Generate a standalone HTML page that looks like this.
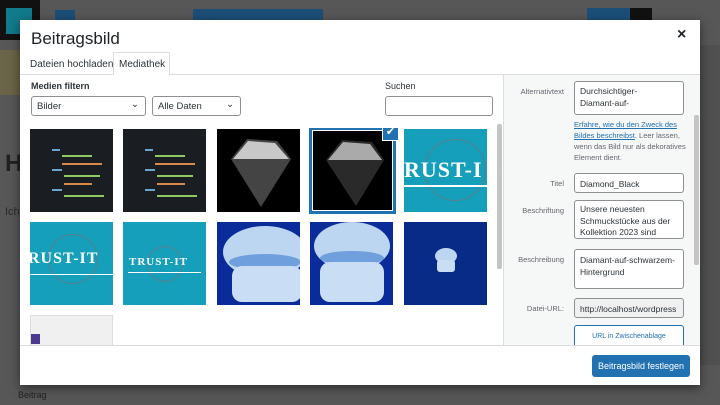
<!DOCTYPE html>
<html><head><meta charset="utf-8"><style>
*{box-sizing:border-box;margin:0;padding:0}
body{width:720px;height:405px;overflow:hidden;background:#575757;font-family:"Liberation Sans",sans-serif;position:relative;font-size:9px;color:#1e1e1e}
.abs{position:absolute}
.modal{left:20px;top:20px;width:680px;height:365px;background:#fff;box-shadow:0 3px 10px rgba(0,0,0,.5)}
.tile{position:absolute;width:83px;height:83px;overflow:hidden}
.code{background:#1a1d22}
.code i{position:absolute;height:2px;display:block}
.teal{background:#159fbb}
.jf{background:#0a2c9a}
.inp{position:absolute;background:#fff;border:1px solid #8c8f94;border-radius:3px;font-size:8.5px;padding:5px 5px;line-height:11px;color:#2c3338;overflow:hidden}
.lbl{position:absolute;font-size:7.5px;color:#646970;text-align:right;width:60px}
</style></head><body>
<div class="abs" style="left:0;top:0;width:40px;height:40px;background:#111"></div>
<div class="abs" style="left:6px;top:8px;width:26px;height:26px;background:#117a8b"></div>
<div class="abs" style="left:55px;top:10px;width:20px;height:20px;background:#1c4f78"></div>
<div class="abs" style="left:193px;top:9px;width:130px;height:20px;background:#1c4f78;border-radius:2px"></div>
<div class="abs" style="left:587px;top:8px;width:64px;height:22px;background:#1c4f78"></div>
<div class="abs" style="left:630px;top:8px;width:22px;height:22px;background:#111"></div>
<div class="abs" style="left:0;top:50px;width:20px;height:45px;background:#6a6448"></div>
<div class="abs" style="left:5px;top:150px;font-size:24px;font-weight:bold;color:#222">H</div>
<div class="abs" style="left:5px;top:206px;font-size:11px;color:#2a2a2a">Ich</div>
<div class="abs" style="left:18px;top:390px;font-size:9px;color:#222">Beitrag</div>
<div class="abs" style="left:700px;top:45px;width:20px;height:320px;background:#505050"></div>

<div class="abs modal">
 <div class="abs" style="left:11px;top:9px;font-size:17px;color:#1d2327">Beitragsbild</div>
 <div class="abs" style="left:657px;top:6px;font-size:16px;font-weight:bold;color:#1d2327">×</div>
 <div class="abs" style="left:0;top:54px;width:680px;height:1px;background:#dcdcde"></div>
 <div class="abs" style="left:10px;top:39px;font-size:10px;color:#2c3338">Dateien hochladen</div>
 <div class="abs" style="left:93px;top:32px;width:57px;height:23px;background:#fff;border:1px solid #dcdcde;border-bottom:none"></div>
 <div class="abs" style="left:99px;top:39px;font-size:10px;color:#2c3338">Mediathek</div>
 <div class="abs" style="left:11px;top:61px;font-size:9px;font-weight:bold;color:#2c3338">Medien filtern</div>
 <div class="inp" style="left:11px;top:76px;width:115px;height:20px;font-size:9.5px;padding:4px 5px">Bilder<span style="position:absolute;right:6px;top:2px">⌄</span></div>
 <div class="inp" style="left:132px;top:76px;width:89px;height:20px;font-size:9.5px;padding:4px 5px">Alle Daten<span style="position:absolute;right:6px;top:2px">⌄</span></div>
 <div class="abs" style="left:365px;top:61px;font-size:9px;color:#2c3338">Suchen</div>
 <div class="inp" style="left:365px;top:76px;width:108px;height:20px"></div>
 <div class="abs" style="left:0;top:108px;width:477px;height:217px;overflow:hidden">
  <div class="tile code" style="left:10px;top:1px"><i style="left:22px;top:20px;width:8px;background:#6aa7d0"></i><i style="left:32px;top:26px;width:30px;background:#8fc964"></i><i style="left:32px;top:34px;width:40px;background:#d88a4a"></i><i style="left:22px;top:40px;width:10px;background:#6aa7d0"></i><i style="left:34px;top:46px;width:36px;background:#8fc964"></i><i style="left:34px;top:54px;width:28px;background:#d88a4a"></i><i style="left:22px;top:60px;width:10px;background:#6aa7d0"></i><i style="left:34px;top:66px;width:40px;background:#8fc964"></i></div>
  <div class="tile code" style="left:103px;top:1px"><i style="left:22px;top:20px;width:8px;background:#6aa7d0"></i><i style="left:32px;top:26px;width:30px;background:#8fc964"></i><i style="left:32px;top:34px;width:40px;background:#d88a4a"></i><i style="left:22px;top:40px;width:10px;background:#6aa7d0"></i><i style="left:34px;top:46px;width:36px;background:#8fc964"></i><i style="left:34px;top:54px;width:28px;background:#d88a4a"></i><i style="left:22px;top:60px;width:10px;background:#6aa7d0"></i><i style="left:34px;top:66px;width:40px;background:#8fc964"></i></div>
  <div class="tile" style="left:197px;top:1px;background:#000"><svg width="83" height="83"><polygon points="14,30 30,10 60,12 74,30 44,78" fill="#444"/><polygon points="16,30 31,12 58,14 72,30" fill="#c8c8c8"/></svg></div>
  <div class="tile" style="left:289px;top:-1px;width:87px;height:87px;border:3px solid #2271b1;background:#000;box-shadow:0 0 0 1px #fff inset"><svg width="81" height="81"><polygon points="14,30 30,10 60,12 72,30 44,76" fill="#2a2a2a"/><polygon points="16,30 31,12 58,14 70,30" fill="#aaa"/></svg></div>
  <div class="abs" style="left:362px;top:-4px;width:17px;height:17px;background:#2271b1;border:1px solid #fff;color:#fff;font-size:11px;text-align:center;line-height:15px">✔</div>
  <div class="tile teal" style="left:384px;top:1px"><div style="position:absolute;left:20px;top:10px;width:62px;height:62px;border:1px solid #5a7f8a;border-radius:50%"></div><div style="position:absolute;left:0;top:28px;color:#fff;font-family:'Liberation Serif',serif;font-weight:bold;font-size:22px;white-space:nowrap;letter-spacing:1px">RUST-I</div><div style="position:absolute;left:0;top:56px;width:83px;height:2px;background:#fff"></div></div>
  <div class="tile teal" style="left:10px;top:94px"><div style="position:absolute;left:18px;top:12px;width:50px;height:50px;border:1px solid #5a7f8a;border-radius:50%"></div><div style="position:absolute;left:-2px;top:28px;color:#fff;font-family:'Liberation Serif',serif;font-weight:bold;font-size:16px;white-space:nowrap;letter-spacing:1px">RUST-IT</div><div style="position:absolute;left:0;top:52px;width:83px;height:1px;background:#fff"></div></div>
  <div class="tile teal" style="left:103px;top:94px"><div style="position:absolute;left:24px;top:24px;width:36px;height:36px;border:1px solid #5a7f8a;border-radius:50%"></div><div style="position:absolute;left:6px;top:34px;color:#fff;font-family:'Liberation Serif',serif;font-weight:bold;font-size:11px;white-space:nowrap;letter-spacing:1px">TRUST-IT</div><div style="position:absolute;left:5px;top:50px;width:73px;height:1px;background:#fff"></div></div>
  <div class="tile jf" style="left:197px;top:94px"><svg width="83" height="83"><ellipse cx="48" cy="30" rx="42" ry="26" fill="#bcd6f2"/><ellipse cx="48" cy="40" rx="36" ry="8" fill="#6f9fdc"/><rect x="15" y="44" width="70" height="36" rx="10" fill="#c9def4"/></svg></div>
  <div class="tile jf" style="left:290px;top:94px"><svg width="83" height="83"><ellipse cx="42" cy="24" rx="38" ry="24" fill="#bcd6f2"/><ellipse cx="42" cy="36" rx="32" ry="7" fill="#6f9fdc"/><rect x="10" y="40" width="64" height="40" rx="10" fill="#c9def4"/></svg></div>
  <div class="tile" style="left:384px;top:94px;background:#072b86"><svg width="83" height="83"><ellipse cx="42" cy="34" rx="11" ry="8" fill="#bcd6f2"/><rect x="33" y="38" width="18" height="12" rx="3" fill="#c9def4"/></svg></div>
  <div class="tile" style="left:10px;top:187px;background:#f0f0f0;border:1px solid #ddd"><div style="position:absolute;left:0;top:18px;width:9px;height:10px;background:#4b3a90"></div></div>
 </div>
 <div class="abs" style="left:477px;top:104px;width:5px;height:145px;background:#c4c4c4;border-radius:2px"></div>
 <div class="abs" style="left:483px;top:55px;width:197px;height:270px;background:#f6f7f7;border-left:1px solid #dcdcde;overflow:hidden">
  <div class="lbl" style="left:0;top:12px">Alternativtext</div>
  <div class="inp" style="left:70px;top:6px;width:110px;height:34px;padding:3px 5px;line-height:12px">Durchsichtiger-<br>Diamant-auf-</div>
  <div class="abs" style="left:70px;top:44px;width:112px;font-size:7.5px;line-height:11px;color:#646970"><span style="color:#2271b1;text-decoration:underline">Erfahre, wie du den Zweck des Bildes beschreibst</span>. Leer lassen, wenn das Bild nur als dekoratives Element dient.</div>
  <div class="lbl" style="left:0;top:104px">Titel</div>
  <div class="inp" style="left:70px;top:98px;width:110px;height:20px">Diamond_Black</div>
  <div class="lbl" style="left:0;top:131px">Beschriftung</div>
  <div class="inp" style="left:70px;top:125px;width:110px;height:39px;padding:3px 5px;line-height:11.5px">Unsere neuesten Schmuckstücke aus der Kollektion 2023 sind</div>
  <div class="lbl" style="left:0;top:180px">Beschreibung</div>
  <div class="inp" style="left:70px;top:174px;width:110px;height:40px;padding:5px 5px;line-height:11.5px">Diamant-auf-schwarzem-Hintergrund</div>
  <div class="lbl" style="left:0;top:229px">Datei-URL:</div>
  <div class="inp" style="left:70px;top:223px;width:110px;height:20px;background:#f0f0f1;white-space:nowrap">http://localhost/wordpress</div>
  <div class="inp" style="left:70px;top:250px;width:110px;height:26px;border-color:#2271b1;color:#2271b1;font-size:7px;text-align:center;padding-top:5px">URL in Zwischenablage</div>
  <div class="abs" style="left:190px;top:40px;width:5px;height:150px;background:#c4c4c4;border-radius:2px"></div>
 </div>
 <div class="abs" style="left:0;top:325px;width:680px;height:1px;background:#dcdcde"></div>
 <div class="abs" style="left:572px;top:335px;width:98px;height:22px;background:#2271b1;border-radius:3px;color:#fff;font-size:9px;text-align:center;line-height:22px">Beitragsbild festlegen</div>
</div>
</body></html>
